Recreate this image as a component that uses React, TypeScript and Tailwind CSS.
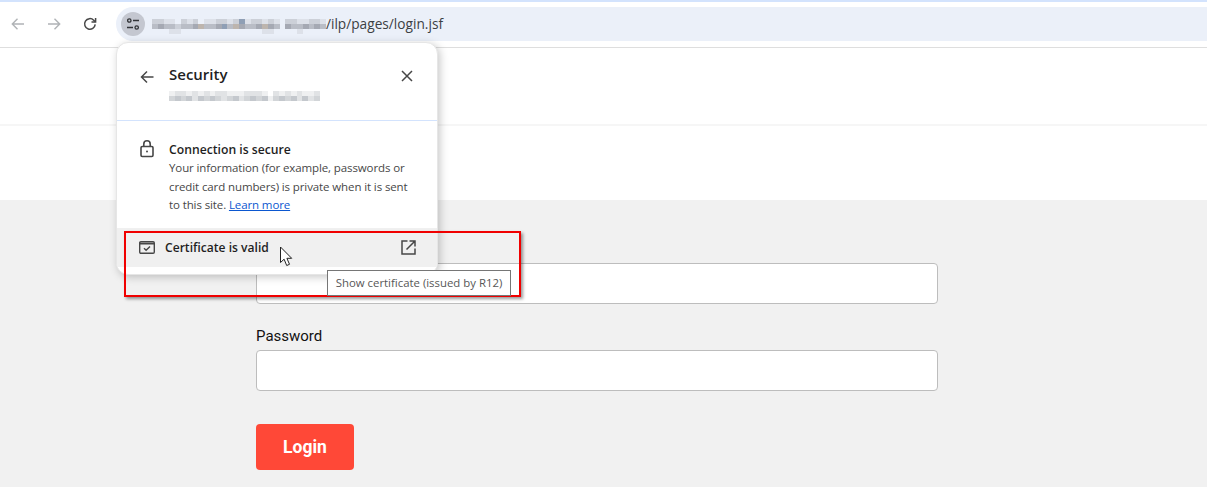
// digit -> tone for the pixelated (redacted) host name
const urlTones: Record<string, string> = {
  '0': 'bg-transparent',
  '1': 'bg-[#dde1e9]',
  '2': 'bg-[#ccd0d8]',
  '3': 'bg-[#b9bdc6]',
  '4': 'bg-[#a5a9b3]',
  '5': 'bg-[#8f9fb5]',
  '6': 'bg-[#bdb5ae]',
}

const urlRows = [
  '221102120112212512212102211221',
  '343323346334536433464304334343',
  '000110000000000000011000010000',
]

const hostTones: Record<string, string> = {
  '0': 'bg-transparent',
  '1': 'bg-[#eff0f1]',
  '2': 'bg-[#e1e3e5]',
  '3': 'bg-[#d2d5d8]',
  '4': 'bg-[#c4c8cd]',
}

const hostRows = [
  '12212121221112221021212112',
  '34342434323423434134342423',
]

function Mosaic({ rows, tones, cell }: { rows: string[]; tones: Record<string, string>; cell: string }) {
  return (
    <div className="flex flex-col">
      {rows.map((row, r) => (
        <div key={r} className="flex">
          {row.split('').map((c, i) => (
            <div key={i} className={`${cell} ${tones[c]}`} />
          ))}
        </div>
      ))}
    </div>
  )
}

function Toolbar() {
  return (
    <div className="flex h-[48px] items-start border-b border-[#dedede] border-t-[2px] border-t-[#d3e3fd] bg-white">
      <div className="flex h-[34px] mt-[5px] w-[116px] shrink-0 items-center">
        <svg className="ml-[11px]" width="14" height="14" viewBox="0 0 14 14" fill="none" stroke="#b0b3b6" strokeWidth="1.4">
          <path d="M13 7H1.5M6.5 1.8 1.3 7l5.2 5.2" />
        </svg>
        <svg className="ml-[22px]" width="14" height="14" viewBox="0 0 14 14" fill="none" stroke="#b0b3b6" strokeWidth="1.4">
          <path d="M1 7h11.5M7.5 1.8 12.7 7l-5.2 5.2" />
        </svg>
        <svg className="ml-[22px]" width="14" height="14" viewBox="0 0 14 14" fill="none" stroke="#474747" strokeWidth="1.5">
          <path d="M12.2 7.4a5.3 5.3 0 1 1-1.5-4.2l1.6 1.6" />
          <path d="M12.6 1v4.1H8.5" />
        </svg>
      </div>
      <div className="flex h-[34px] mt-[5px] flex-1 items-center rounded-l-[17px] bg-[#ebf0f9] pl-[5px]">
        <div className="flex h-[24px] w-[24px] items-center justify-center rounded-full bg-[#c4c7d0]">
          <svg width="14" height="14" viewBox="0 0 14 14" fill="none" stroke="#303236" strokeWidth="1.3">
            <circle cx="3.3" cy="3.5" r="1.7" />
            <path d="M7 3.5h6M1 10.5h6" />
            <circle cx="10.7" cy="10.5" r="1.7" />
          </svg>
        </div>
        <div className="ml-[7px] mt-[4px]">
          <Mosaic rows={urlRows} tones={urlTones} cell="h-[5px] w-[5.8px]" />
        </div>
        <span className="text-[13.7px] text-[#3c4043]">/ilp/pages/login.jsf</span>
      </div>
    </div>
  )
}

function SecurityPopup() {
  return (
    <div className="absolute left-[116px] top-[42px] h-[233px] w-[322px] overflow-hidden rounded-[12px] border border-[#e6e6e6] bg-white shadow-[2px_2px_8px_rgba(0,0,0,0.22)]">
      <div className="flex h-[78px] border-b border-[#d3e3fd] pl-[23px] pt-[20px]">
        <svg className="mt-[7px]" width="14" height="14" viewBox="0 0 14 14" fill="none" stroke="#474747" strokeWidth="1.5">
          <path d="M13.5 7H1.5M7 1.5 1.5 7 7 12.5" />
        </svg>
        <div className="ml-[15px] flex-1">
          <div className="text-[15px] font-semibold leading-[22px] text-[#1f1f1f]">Security</div>
          <div className="mt-[6px]">
            <Mosaic rows={hostRows} tones={hostTones} cell="h-[5px] w-[5.8px]" />
          </div>
        </div>
        <svg className="mr-[24px] mt-[7px]" width="12" height="12" viewBox="0 0 12 12" fill="none" stroke="#474747" strokeWidth="1.5">
          <path d="M1 1l10 10M11 1 1 11" />
        </svg>
      </div>
      <div className="flex h-[107px] pl-[23px] pt-[20px]">
        <svg className="mt-[-1px]" width="14" height="18" viewBox="0 0 14 18" fill="none" stroke="#474747" strokeWidth="1.6">
          <rect x="1" y="6.5" width="12" height="10" rx="1.2" />
          <path d="M3.8 6.5V4a3.2 3.2 0 0 1 6.4 0v2.5" />
          <circle cx="7" cy="11.5" r="1" fill="#474747" stroke="none" />
        </svg>
        <div className="ml-[15px] whitespace-nowrap">
          <div className="mt-[1px] text-[12.2px] font-semibold leading-[16px] text-[#1f1f1f]">Connection is secure</div>
          <p className="mt-[1px] text-[11.5px] leading-[18.5px] tracking-[-0.11px] text-[#474747]">
            Your information (for example, passwords or
            <br />
            credit card numbers) is private when it is sent
            <br />
            to this site. <span className="text-[#0b57d0] underline">Learn more</span>
          </p>
        </div>
      </div>
      <div className="flex h-[39px] items-center bg-[#f0f0f0] pl-[22px] pr-[21px]">
        <svg width="16" height="13" viewBox="0 0 16 13" fill="none" stroke="#474747" strokeWidth="1.4">
          <rect x="0.7" y="0.7" width="14.6" height="11.6" rx="1.2" />
          <path d="M0.7 2.6h14.6" strokeWidth="1.8" />
          <path d="M5 7.2l2.1 2.1 3.9-3.9" />
        </svg>
        <span className="ml-[10px] mt-[1px] flex-1 text-[12.1px] font-semibold text-[#1f1f1f]">Certificate is valid</span>
        <svg width="15" height="15" viewBox="0 0 15 15" fill="none" stroke="#474747" strokeWidth="1.5">
          <path d="M6.5 1H1v13h13V8.5" />
          <path d="M5.5 9.5 14 1M8.5 1H14v5.5" />
        </svg>
      </div>
    </div>
  )
}

function Overlays() {
  return (
    <>
      <div className="absolute left-[124px] top-[231px] h-[66px] w-[397px] border-[2px] border-[#f00000] shadow-[2px_2px_3px_rgba(0,0,0,0.4)]" />
      <svg className="absolute left-[279px] top-[246px]" width="14" height="21" viewBox="0 0 14 21">
        <path d="M1.5 1v15.5l3.6-3.3 2.6 6.3 2.8-1.2-2.6-6h4.8z" fill="#fff" stroke="#222" strokeWidth="1" />
      </svg>
      <div className="absolute left-[327px] top-[270px] flex h-[26px] w-[184px] items-center justify-center border border-[#767676] bg-white text-[11.4px] text-[#575757]">
        Show certificate (issued by R12)
      </div>
    </>
  )
}

export default function App() {
  return (
    <div className="relative h-[487px] overflow-hidden bg-[#f1f1f1] font-['Open_Sans',sans-serif]">
      <Toolbar />
      <div className="h-[76px] bg-white" />
      <div className="h-[2px] bg-[#f6f6f6]" />
      <div className="h-[74px] bg-white" />
      <div className="ml-[256px] w-[682px] pt-[63px] font-['Roboto',sans-serif]">
        <div className="h-[41px] rounded-[4px] border border-[#bdbdbd] bg-white" />
        <label className="mt-[22px] block text-[15px] leading-[20px] text-[#111111]">Password</label>
        <div className="mt-[4px] h-[41px] rounded-[4px] border border-[#bdbdbd] bg-white" />
        <button className="mt-[33px] h-[46px] w-[98px] rounded-[4px] bg-[#ff4837] text-[17.5px] font-bold text-white">Login</button>
      </div>
      <SecurityPopup />
      <Overlays />
    </div>
  )
}
